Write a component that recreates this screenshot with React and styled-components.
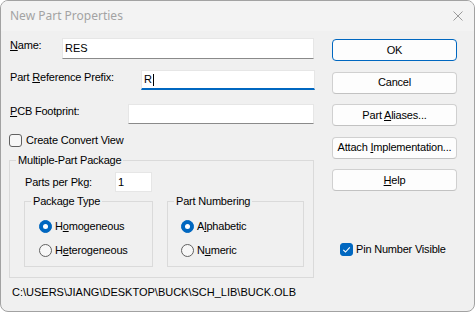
import React from "react";
import styled, { createGlobalStyle } from "styled-components";

const GlobalStyle = createGlobalStyle`
  html, body { margin: 0; padding: 0; background: #ffffff; }
  body {
    font-family: "Liberation Sans", Arial, sans-serif;
    font-size: 11px;
    color: #000;
  }
  #root { width: 475px; height: 313px; }
`;

const Window = styled.div`
  box-sizing: border-box;
  width: 475px;
  height: 312px;
  border: 1px solid #a2a2a2;
  border-radius: 8px;
  background: #f0f0f0;
  overflow: hidden;
  display: flex;
  flex-direction: column;
`;

const TitleBar = styled.div`
  flex: none;
  height: 30px;
  display: flex;
  align-items: center;
  justify-content: space-between;
  padding: 0 11px 0 9px;
  background: #f3f3f3;
`;

const Title = styled.span`
  font-family: "Noto Sans", "Liberation Sans", sans-serif;
  font-size: 12px;
  color: #a3a3a3;
  line-height: 16px;
`;

const CloseGlyph = styled.svg`
  width: 10px;
  height: 10px;
  display: block;
`;

const Body = styled.div`
  flex: 1;
  padding: 7px 0 0 8px;
`;

const Main = styled.div`
  display: flex;
  gap: 17px;
  align-items: flex-start;
`;

const LeftColumn = styled.div`
  width: 306px;
  display: flex;
  flex-direction: column;
`;

const RightColumn = styled.div`
  width: 125px;
  display: flex;
  flex-direction: column;
  padding-top: 1px;
  gap: 10.5px;
`;

const FieldRow = styled.div`
  display: flex;
  align-items: ${(p) => (p.$center ? "center" : "flex-start")};
  margin-top: ${(p) => p.$top || 0}px;
`;

const FieldLabel = styled.label`
  box-sizing: border-box;
  flex: none;
  width: ${(p) => p.$width}px;
  padding: ${(p) => (p.$center ? "0" : "1px")} 0 0 1px;
  line-height: 13px;
  letter-spacing: -0.2px;
  white-space: nowrap;
`;

const TextField = styled.div`
  box-sizing: border-box;
  flex: none;
  width: ${(p) => p.$width}px;
  height: ${(p) => p.$height || 20}px;
  background: #ffffff;
  border: 1px solid #e6e6e6;
  border-bottom: ${(p) =>
    p.$focused
      ? "2px solid #0067c0"
      : p.$plain
      ? "1px solid #e6e6e6"
      : "1px solid #8a8a8a"};
  padding: 0 2px;
  display: flex;
  align-items: center;
  line-height: 13px;
  white-space: nowrap;
`;

const Caret = styled.span`
  display: inline-block;
  width: 1px;
  height: 12px;
  margin-left: 1px;
  background: #000;
`;

const Key = styled.span`
  text-decoration: underline;
  text-underline-offset: 1px;
`;

const Caption = styled.span`
  white-space: nowrap;
`;

const CheckRow = styled.label`
  display: flex;
  align-items: center;
  gap: ${(p) => p.$gap || 4}px;
  height: 13px;
  margin-top: ${(p) => p.$top || 0}px;
  padding-left: ${(p) => p.$indent || 0}px;
  line-height: 13px;
  letter-spacing: -0.2px;
  white-space: nowrap;
`;

const CheckBox = styled.span`
  box-sizing: border-box;
  flex: none;
  width: 13px;
  height: 13px;
  border-radius: 3px;
  border: 1px solid ${(p) => (p.$checked ? "#0067c0" : "#616161")};
  background: ${(p) => (p.$checked ? "#0067c0" : "#f7f7f7")};
  display: flex;
  align-items: center;
  justify-content: center;
`;

const CheckMark = styled.svg`
  width: 11px;
  height: 11px;
  display: block;
`;

const Group = styled.fieldset`
  box-sizing: border-box;
  width: ${(p) => p.$width}px;
  margin: ${(p) => p.$top || 0}px 0 0 0;
  padding: 0;
  border: 1px solid #dadada;
  min-width: 0;
`;

const Legend = styled.legend`
  margin-left: 6px;
  padding: 0 2px;
  line-height: 13px;
  letter-spacing: -0.2px;
  white-space: nowrap;
`;

const GroupContent = styled.div`
  display: flex;
  flex-direction: column;
  padding: ${(p) => p.$pad};
  gap: ${(p) => p.$gap || 0}px;
`;

const SubGroups = styled.div`
  display: flex;
  gap: 14px;
  margin-top: 3px;
`;

const RadioRow = styled.label`
  display: flex;
  align-items: center;
  gap: 3px;
  height: 16px;
  line-height: 13px;
  letter-spacing: -0.2px;
  white-space: nowrap;
`;

const Radio = styled.span`
  box-sizing: border-box;
  flex: none;
  width: 13px;
  height: 13px;
  border-radius: 50%;
  border: 1px solid ${(p) => (p.$checked ? "#0067c0" : "#616161")};
  background: ${(p) => (p.$checked ? "#0067c0" : "#f7f7f7")};
  display: flex;
  align-items: center;
  justify-content: center;

  &::after {
    content: "";
    display: ${(p) => (p.$checked ? "block" : "none")};
    width: 5px;
    height: 5px;
    border-radius: 50%;
    background: #ffffff;
  }
`;

const Button = styled.button`
  box-sizing: border-box;
  width: 125px;
  height: 22px;
  padding: 0;
  margin: 0;
  background: #fdfdfd;
  border: 1px solid ${(p) => (p.$default ? "#0067c0" : "#d0d0d0")};
  border-bottom-color: ${(p) => (p.$default ? "#0067c0" : "#c2c2c2")};
  border-radius: 4px;
  font-family: inherit;
  font-size: 11px;
  line-height: 13px;
  letter-spacing: -0.2px;
  color: #000;
  white-space: nowrap;
`;

const PathText = styled.div`
  margin-top: 8px;
  padding-left: 3px;
  line-height: 13px;
  white-space: nowrap;
`;

export default function App() {
  return (
    <>
      <GlobalStyle />
      <Window>
        <TitleBar>
          <Title>New Part Properties</Title>
          <CloseGlyph viewBox="0 0 10 10">
            <path d="M0.5 0.5 L9.5 9.5 M9.5 0.5 L0.5 9.5" stroke="#9a9a9a" strokeWidth="1" fill="none" />
          </CloseGlyph>
        </TitleBar>
        <Body>
          <Main>
            <LeftColumn>
              <FieldRow>
                <FieldLabel $width={53}>
                  <Key>N</Key>ame:
                </FieldLabel>
                <TextField $width={252} $height={21}>RES</TextField>
              </FieldRow>
              <FieldRow $top={11}>
                <FieldLabel $width={132}>
                  Part <Key>R</Key>eference Prefix:
                </FieldLabel>
                <TextField $width={174} $focused>
                  R<Caret />
                </TextField>
              </FieldRow>
              <FieldRow $top={14}>
                <FieldLabel $width={119}>
                  <Key>P</Key>CB Footprint:
                </FieldLabel>
                <TextField $width={186} />
              </FieldRow>
              <CheckRow $top={10}>
                <CheckBox />
                <Caption>Create Convert View</Caption>
              </CheckRow>
              <Group $width={305} $top={7}>
                <Legend>Multiple-Part Package</Legend>
                <GroupContent $pad="5px 9px 10px 14px">
                  <FieldRow $center>
                    <FieldLabel $width={91} $center>
                      Parts per Pk<Key>g</Key>:
                    </FieldLabel>
                    <TextField $width={37} $plain>1</TextField>
                  </FieldRow>
                  <SubGroups>
                    <Group $width={129}>
                      <Legend>Package Type</Legend>
                      <GroupContent $pad="10px 0 8px 14px" $gap={8}>
                        <RadioRow>
                          <Radio $checked />
                          <Caption>
                            H<Key>o</Key>mogeneous
                          </Caption>
                        </RadioRow>
                        <RadioRow>
                          <Radio />
                          <Caption>
                            H<Key>e</Key>terogeneous
                          </Caption>
                        </RadioRow>
                      </GroupContent>
                    </Group>
                    <Group $width={137}>
                      <Legend>Part Numbering</Legend>
                      <GroupContent $pad="10px 0 8px 13px" $gap={8}>
                        <RadioRow>
                          <Radio $checked />
                          <Caption>
                            A<Key>l</Key>phabetic
                          </Caption>
                        </RadioRow>
                        <RadioRow>
                          <Radio />
                          <Caption>
                            N<Key>u</Key>meric
                          </Caption>
                        </RadioRow>
                      </GroupContent>
                    </Group>
                  </SubGroups>
                </GroupContent>
              </Group>
            </LeftColumn>
            <RightColumn>
              <Button $default>OK</Button>
              <Button>Cancel</Button>
              <Button>
                Part <Key>A</Key>liases...
              </Button>
              <Button>
                Attach <Key>I</Key>mplementation...
              </Button>
              <Button>
                <Key>H</Key>elp
              </Button>
              <CheckRow $top={41.5} $indent={8} $gap={3}>
                <CheckBox $checked>
                  <CheckMark viewBox="0 0 11 11">
                    <path d="M2.3 5.8 L4.5 8 L8.8 3.3" stroke="#ffffff" strokeWidth="1.1" fill="none" />
                  </CheckMark>
                </CheckBox>
                <Caption>Pin Number Visible</Caption>
              </CheckRow>
            </RightColumn>
          </Main>
          <PathText>C:\USERS\JIANG\DESKTOP\BUCK\SCH_LIB\BUCK.OLB</PathText>
        </Body>
      </Window>
    </>
  );
}
